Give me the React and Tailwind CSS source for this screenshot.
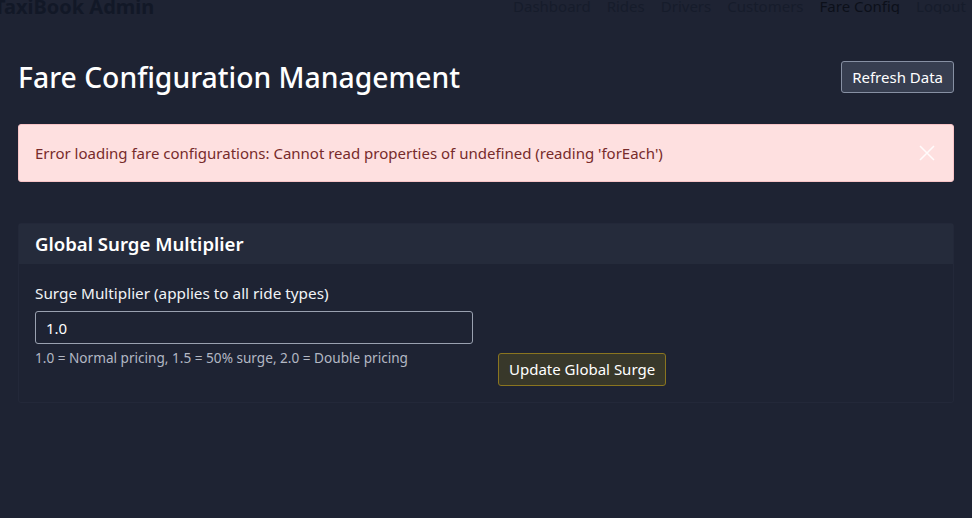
import React from "react";

export default function App() {
  const font = { fontFamily: '"Noto Sans", "Open Sans", sans-serif' };
  return (
    <div className="min-h-[518px] w-full bg-[#1e2333] text-white" style={font}>
      <nav className="h-[14px] overflow-hidden flex items-end justify-between pr-[6px]">
        <span className="ml-[-6px] text-[20px] font-bold leading-[20px] text-[#121827] translate-y-[3px]">TaxiBook Admin</span>
        <div className="flex gap-[16px] text-[15px] leading-[16px] text-[#161c2b]">
          <span>Dashboard</span>
          <span>Rides</span>
          <span>Drivers</span>
          <span>Customers</span>
          <span className="text-[#0c101a]">Fare Config</span>
          <span>Logout</span>
        </div>
      </nav>

      <div className="px-[18px] pt-[45px]">
        <div className="flex items-center justify-between">
          <h1 className="text-[28.3px] font-medium leading-[36px] text-white">Fare Configuration Management</h1>
          <button className="h-[32px] px-[10px] rounded-[3px] border border-[#8790a3] bg-[#373e50] text-[15px] text-white">Refresh Data</button>
        </div>

        <div className="mt-[29px] h-[58px] flex items-center justify-between rounded-[3px] border border-[#f7c3c6] bg-[#fee0e0] pl-[16px] pr-[16px] text-[15px] text-[#772b2b]">
          <span>Error loading fare configurations: Cannot read properties of undefined (reading 'forEach')</span>
          <svg width="16" height="16" viewBox="0 0 16 16" className="mr-[2px]">
            <path d="M1 1 L15 15 M15 1 L1 15" stroke="#ffffff" strokeWidth="1.6" strokeOpacity="0.85" />
          </svg>
        </div>

        <div className="mt-[41px] rounded-[3px] border border-[#232839]">
          <div className="h-[40px] flex items-center bg-[#252b3b] px-[16px]">
            <h2 className="text-[18.6px] font-semibold text-white">Global Surge Multiplier</h2>
          </div>
          <div className="px-[16px] pt-[18px] pb-[16px]">
            <div className="flex">
              <div className="w-[451px] pr-[13px] pb-[19px]">
                <label className="block text-[15.3px] leading-[22px] text-[#f1f3f6]">Surge Multiplier (applies to all ride types)</label>
                <input
                  readOnly
                  value="1.0"
                  className="mt-[7px] block h-[33px] w-full rounded-[3px] border border-[#9aa1b0] bg-[#1e2333] px-[10px] text-[15px] text-white outline-none"
                  style={font}
                />
                <div className="mt-[5px] text-[13.6px] leading-[18px] text-[#b3b8c4]">1.0 = Normal pricing, 1.5 = 50% surge, 2.0 = Double pricing</div>
              </div>
              <div className="flex items-end pl-[12px]">
                <button className="h-[33px] px-[10px] rounded-[3px] border border-[#8a7520] bg-[#38382a] text-[15px] text-white" style={font}>Update Global Surge</button>
              </div>
            </div>
          </div>
        </div>
      </div>
    </div>
  );
}
